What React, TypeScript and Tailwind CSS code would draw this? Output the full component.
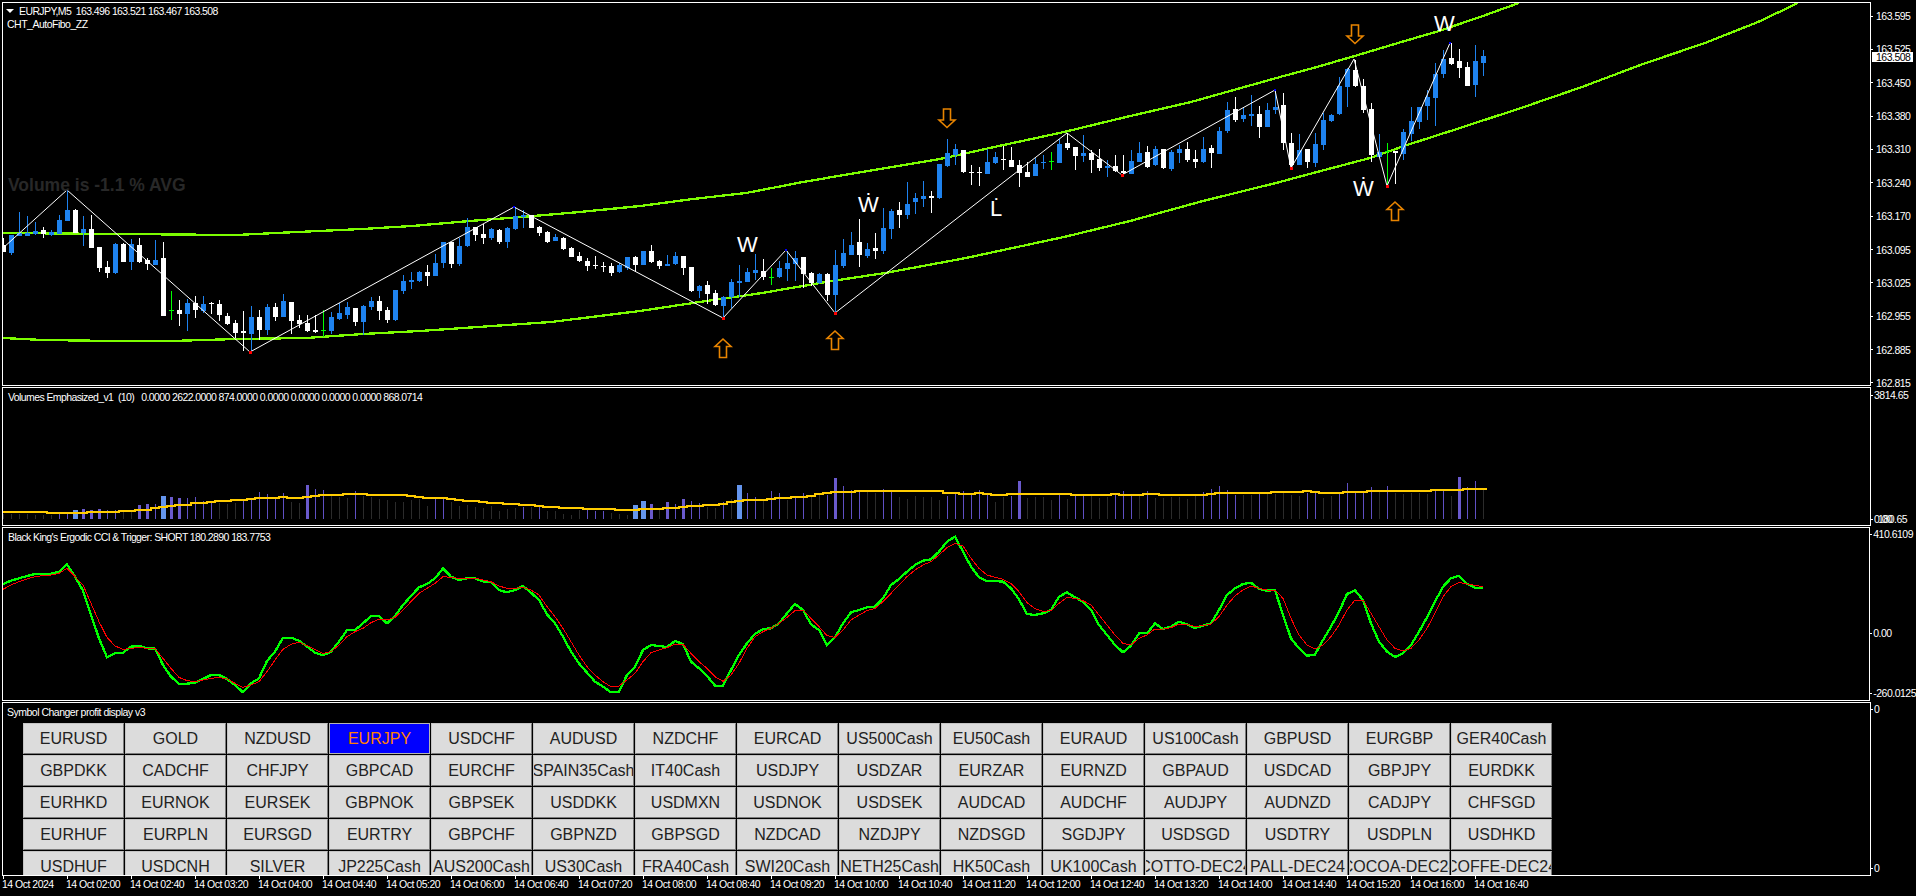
// All chart series were sampled off 1916x896 crops: keep y * 3 so the numbers stay whole.
const y3 = (v: number) => v / 3;
const cx = (i: number) => 3 + 8 * i;

type Candle = [string, number, number, number, number];

// colour, high, body top, body bottom, low
const candles: Candle[] = [
  ["w", 715, 735, 755, 755], ["b", 705, 705, 760, 765], ["b", 637, 700, 710, 710], ["b", 648, 698, 706, 708],
  ["b", 665, 693, 702, 705], ["w", 680, 690, 702, 713], ["b", 690, 696, 706, 708], ["b", 645, 660, 702, 702],
  ["b", 570, 630, 663, 663], ["w", 628, 630, 698, 700], ["b", 648, 687, 698, 738], ["w", 645, 687, 743, 743],
  ["w", 740, 740, 803, 815], ["w", 782, 802, 820, 833], ["b", 730, 732, 820, 822], ["w", 730, 732, 785, 785],
  ["b", 718, 732, 785, 810], ["w", 715, 735, 785, 790], ["w", 775, 780, 793, 810], ["b", 720, 780, 795, 795],
  ["w", 727, 773, 947, 947], ["g", 873, 930, 933, 960], ["w", 900, 930, 942, 978], ["b", 898, 910, 942, 995],
  ["w", 888, 910, 932, 953], ["b", 888, 912, 932, 940], ["w", 907, 908, 911, 943], ["w", 900, 912, 945, 962],
  ["w", 938, 948, 972, 975], ["w", 960, 968, 998, 1015], ["w", 933, 993, 998, 1052], ["b", 918, 950, 1002, 1055],
  ["w", 930, 950, 990, 1020], ["b", 912, 922, 990, 1005], ["w", 910, 920, 950, 965], ["b", 882, 903, 950, 952],
  ["w", 905, 906, 962, 1000], ["w", 945, 960, 972, 985], ["w", 945, 968, 993, 995], ["w", 945, 990, 995, 1000],
  ["g", 930, 990, 993, 1012], ["b", 935, 952, 995, 1000], ["b", 908, 938, 957, 960], ["b", 905, 922, 945, 955],
  ["w", 925, 925, 968, 978], ["b", 915, 918, 965, 1005], ["b", 892, 903, 920, 932], ["w", 888, 903, 933, 960],
  ["w", 920, 930, 960, 968], ["b", 870, 870, 960, 962], ["b", 825, 843, 873, 882], ["b", 817, 840, 846, 867],
  ["b", 813, 816, 843, 845], ["w", 795, 816, 828, 858], ["b", 763, 790, 828, 830], ["b", 725, 727, 790, 802],
  ["w", 725, 727, 792, 803], ["b", 715, 738, 793, 798], ["b", 655, 682, 740, 742], ["w", 680, 682, 705, 722],
  ["w", 672, 702, 713, 732], ["b", 685, 688, 714, 720], ["w", 688, 690, 727, 733], ["b", 680, 685, 728, 743],
  ["b", 620, 648, 688, 690], ["b", 630, 645, 652, 683], ["w", 645, 646, 684, 685], ["w", 678, 681, 698, 707],
  ["w", 692, 695, 725, 727], ["b", 703, 710, 723, 725], ["w", 710, 714, 748, 750], ["w", 742, 744, 770, 772],
  ["w", 755, 768, 783, 785], ["w", 775, 782, 797, 815], ["w", 768, 796, 800, 807], ["w", 785, 797, 800, 815],
  ["w", 790, 798, 818, 828], ["b", 790, 796, 818, 820], ["b", 770, 772, 805, 808], ["w", 768, 770, 795, 815],
  ["b", 752, 753, 795, 795], ["w", 735, 753, 785, 788], ["w", 780, 783, 797, 806], ["b", 765, 792, 797, 798],
  ["b", 757, 768, 792, 795], ["w", 767, 768, 803, 825], ["w", 800, 802, 875, 876], ["b", 855, 858, 873, 893],
  ["w", 843, 855, 882, 913], ["w", 870, 880, 917, 918], ["b", 888, 892, 918, 955], ["b", 838, 847, 893, 925],
  ["b", 795, 843, 848, 890], ["b", 805, 815, 845, 847], ["b", 762, 810, 818, 840], ["w", 778, 814, 832, 840],
  ["g", 803, 832, 835, 855], ["b", 783, 805, 833, 835], ["b", 752, 790, 809, 842], ["b", 753, 775, 792, 842],
  ["w", 770, 771, 821, 862], ["w", 815, 820, 850, 858], ["b", 818, 822, 850, 852], ["w", 820, 822, 885, 905],
  ["b", 750, 795, 885, 940], ["b", 717, 760, 800, 803], ["b", 697, 735, 765, 767], ["w", 657, 727, 767, 800],
  ["b", 730, 747, 768, 775], ["w", 698, 745, 755, 775], ["b", 625, 685, 753, 762], ["b", 628, 633, 687, 717],
  ["w", 605, 631, 645, 682], ["b", 545, 612, 645, 657], ["b", 578, 595, 608, 640], ["b", 543, 588, 597, 622],
  ["w", 573, 589, 594, 638], ["b", 492, 492, 595, 597], ["b", 417, 460, 498, 500], ["b", 432, 448, 465, 495],
  ["w", 450, 451, 518, 519], ["w", 495, 516, 519, 555], ["w", 502, 517, 521, 560], ["b", 448, 487, 522, 523],
  ["b", 455, 472, 489, 492], ["w", 438, 478, 482, 510], ["w", 442, 480, 500, 502], ["w", 480, 495, 518, 560],
  ["w", 487, 516, 530, 533], ["b", 475, 492, 528, 530], ["b", 465, 487, 491, 508], ["g", 457, 483, 486, 512],
  ["b", 418, 432, 488, 490], ["w", 398, 430, 446, 448], ["w", 440, 442, 470, 510], ["b", 405, 460, 470, 487],
  ["w", 450, 458, 480, 518], ["w", 447, 477, 505, 513], ["b", 480, 497, 502, 530], ["w", 465, 498, 513, 516],
  ["w", 465, 513, 520, 530], ["b", 450, 484, 522, 523], ["b", 427, 460, 487, 488], ["w", 437, 456, 500, 503],
  ["b", 438, 448, 495, 497], ["w", 447, 448, 505, 507], ["b", 450, 456, 507, 512], ["b", 435, 448, 459, 490],
  ["w", 425, 447, 480, 485], ["w", 450, 477, 486, 503], ["b", 412, 447, 487, 490], ["w", 435, 444, 459, 503],
  ["b", 382, 393, 462, 464], ["b", 307, 330, 393, 400], ["w", 292, 327, 360, 368], ["b", 322, 345, 357, 367],
  ["b", 285, 343, 348, 378], ["w", 317, 342, 381, 413], ["b", 310, 330, 382, 383], ["b", 270, 322, 330, 342],
  ["w", 280, 315, 430, 450], ["w", 400, 430, 495, 505], ["b", 402, 450, 495, 496], ["w", 447, 447, 486, 505],
  ["b", 400, 432, 488, 503], ["b", 340, 360, 435, 452], ["b", 342, 345, 363, 365], ["b", 232, 258, 343, 345],
  ["b", 203, 207, 260, 320], ["w", 180, 210, 258, 260], ["w", 237, 258, 330, 338], ["w", 310, 327, 465, 487],
  ["b", 402, 455, 470, 472], ["g", 430, 452, 456, 555], ["w", 453, 453, 458, 552], ["b", 388, 396, 462, 480],
  ["b", 320, 363, 402, 422], ["b", 322, 322, 368, 387], ["b", 270, 291, 318, 360], ["b", 190, 222, 293, 380],
  ["b", 150, 178, 222, 233], ["w", 130, 175, 192, 197], ["w", 148, 183, 204, 236], ["w", 185, 201, 258, 258],
  ["b", 135, 183, 255, 290], ["b", 150, 168, 189, 228],
];

// kind (0 grey, 1 thin, 2 thick, 3 wide), top of the bar as y * 3 from 380
const volumes: [number, number][] = [
  [0, 402], [0, 402], [0, 402], [0, 402], [0, 405], [0, 405], [0, 405], [1, 402], [1, 402], [3, 390],
  [2, 387], [2, 390], [2, 387], [1, 390], [1, 390], [0, 393], [0, 393], [2, 375], [2, 372], [1, 372],
  [3, 348], [2, 352], [2, 354], [1, 353], [1, 351], [1, 363], [1, 368], [0, 370], [0, 372], [0, 368],
  [1, 360], [1, 360], [1, 336], [1, 342], [1, 355], [1, 339], [0, 365], [0, 368], [2, 315], [1, 327],
  [1, 330], [0, 348], [0, 350], [0, 353], [1, 333], [0, 348], [0, 350], [0, 358], [0, 360], [0, 365],
  [0, 365], [0, 360], [0, 358], [0, 377], [1, 355], [1, 355], [0, 365], [0, 378], [0, 375], [0, 380],
  [0, 385], [0, 378], [0, 393], [0, 388], [0, 385], [1, 380], [0, 380], [1, 378], [0, 392], [0, 393],
  [0, 402], [0, 405], [0, 390], [1, 388], [1, 392], [1, 392], [0, 398], [0, 402], [0, 405], [3, 375],
  [3, 363], [2, 372], [0, 385], [2, 366], [1, 372], [2, 357], [1, 363], [1, 370], [0, 380], [0, 385],
  [1, 367], [0, 358], [3, 315], [1, 339], [1, 351], [0, 360], [1, 333], [1, 339], [0, 360], [1, 355],
  [1, 339], [0, 350], [0, 345], [1, 345], [2, 294], [1, 318], [1, 330], [1, 330], [0, 335], [0, 339],
  [1, 327], [1, 333], [0, 351], [0, 357], [0, 348], [0, 351], [0, 351], [0, 360], [1, 348], [1, 339],
  [1, 333], [1, 345], [1, 330], [1, 339], [0, 366], [0, 350], [1, 348], [2, 303], [0, 354], [0, 351],
  [0, 351], [0, 360], [1, 345], [0, 357], [1, 342], [1, 342], [0, 348], [0, 354], [0, 351], [1, 342],
  [1, 333], [1, 345], [0, 348], [1, 333], [0, 354], [0, 354], [0, 351], [0, 351], [0, 357], [0, 348],
  [1, 336], [1, 327], [1, 318], [1, 330], [1, 345], [0, 345], [0, 345], [1, 342], [0, 342], [0, 342],
  [0, 339], [0, 345], [0, 348], [1, 339], [1, 336], [0, 354], [0, 348], [1, 342], [1, 309], [1, 339],
  [1, 339], [1, 321], [0, 336], [1, 318], [0, 339], [0, 342], [0, 339], [0, 339], [0, 342], [1, 330],
  [1, 330], [0, 348], [2, 291], [1, 321], [1, 303], [0, 325],
];

// gold average, one level per bar (y * 3 from 380)
const average = [
  396, 396, 396, 396, 396, 396, 399, 399, 399, 399, 399, 396, 396, 396, 396, 393, 393, 390, 390, 385,
  381, 378, 374, 374, 369, 369, 366, 363, 363, 360, 360, 357, 353, 353, 353, 350, 353, 353, 350, 347,
  345, 345, 345, 342, 342, 342, 345, 345, 345, 345, 345, 348, 351, 354, 354, 354, 357, 360, 363, 363,
  366, 369, 369, 372, 372, 375, 375, 378, 381, 381, 384, 384, 384, 387, 387, 387, 387, 390, 390, 390,
  387, 387, 387, 384, 384, 381, 378, 378, 375, 375, 372, 366, 363, 360, 360, 360, 357, 354, 354, 351,
  351, 348, 342, 339, 336, 336, 336, 333, 333, 333, 333, 333, 333, 333, 333, 333, 333, 333, 339, 339,
  342, 342, 339, 342, 345, 345, 342, 342, 342, 342, 342, 342, 342, 342, 345, 345, 345, 345, 345, 342,
  345, 345, 345, 342, 342, 345, 345, 345, 345, 345, 345, 342, 339, 339, 339, 339, 339, 339, 339, 336,
  336, 336, 336, 333, 336, 339, 339, 339, 336, 336, 336, 333, 333, 333, 333, 333, 333, 333, 333, 330,
  330, 330, 330, 327, 327, 327,
];

// Ergodic CCI and its trigger, one point per bar (y * 3 from 380)
const cci = [
  612, 602, 595, 588, 582, 582, 581, 575, 553, 590, 632, 705, 775, 832, 820, 818, 800, 797, 805, 806,
  855, 890, 911, 911, 908, 897, 885, 885, 897, 915, 937, 910, 895, 843, 815, 773, 773, 782, 800, 818,
  826, 815, 785, 750, 750, 730, 708, 708, 730, 708, 675, 648, 622, 612, 595, 565, 590, 600, 595, 595,
  604, 607, 630, 637, 630, 618, 638, 660, 703, 730, 770, 815, 850, 878, 905, 920, 937, 935, 885, 860,
  810, 795, 798, 801, 783, 792, 845, 865, 888, 917, 917, 870, 825, 790, 762, 747, 745, 730, 700, 672,
  690, 733, 750, 795, 772, 730, 697, 690, 682, 680, 655, 615, 597, 575, 555, 542, 538, 515, 485, 470,
  515, 560, 592, 603, 603, 605, 625, 658, 702, 705, 700, 690, 650, 637, 652, 665, 690, 735, 765, 795,
  817, 797, 760, 760, 730, 747, 740, 725, 733, 744, 737, 730, 690, 645, 625, 612, 608, 627, 632, 630,
  705, 775, 805, 827, 824, 780, 740, 695, 642, 631, 660, 730, 785, 815, 831, 820, 795, 755, 712, 665,
  620, 595, 587, 612, 623, 623,
];
const trigger = [
  628, 615, 605, 597, 590, 587, 585, 580, 565, 590, 615, 670, 725, 772, 798, 808, 805, 802, 805, 806,
  835, 865, 892, 902, 905, 900, 895, 892, 897, 910, 922, 915, 905, 875, 840, 808, 793, 787, 797, 808,
  820, 815, 795, 770, 755, 745, 728, 718, 720, 712, 690, 665, 640, 625, 610, 590, 592, 595, 595, 594,
  600, 605, 618, 625, 625, 622, 630, 645, 680, 710, 745, 785, 825, 860, 885, 905, 920, 918, 900, 880,
  845, 818, 810, 803, 793, 793, 820, 845, 865, 890, 904, 885, 850, 805, 770, 755, 745, 730, 712, 692,
  690, 715, 740, 767, 772, 750, 720, 705, 692, 685, 665, 640, 615, 590, 570, 555, 545, 525, 503, 490,
  498, 535, 565, 585, 592, 598, 610, 635, 668, 686, 694, 692, 670, 652, 655, 662, 675, 705, 735, 765,
  790, 795, 775, 765, 747, 747, 743, 732, 733, 740, 737, 732, 710, 675, 648, 630, 618, 625, 630, 630,
  655, 715, 765, 795, 807, 795, 770, 735, 690, 660, 660, 700, 740, 780, 805, 813, 805, 780, 745, 700,
  650, 620, 607, 612, 616, 620,
];

const channelTop =
  "3,233 236,235 276,233 362,229 412,226 470,221 522,217 580,212 640,206 693,199 746,193 803,182 856,173 940,159 999,146 1064,132 1126,117 1191,102 1280,77 1317,67 1358,55 1398,43 1439,31 1480,17 1519,3";
const channelBottom =
  "3,338 43,340 114,341 171,341 237,339 306,338 363,334 420,331 478,327 551,322 640,311 693,303 762,293 832,281 885,273 966,258 1064,237 1130,221 1203,201 1276,183 1317,172 1370,158 1407,145 1460,128 1521,108 1582,87 1643,64 1705,43 1758,22 1798,3";
const zigzag =
  "3,248 67,190 250,352 514,207 723,318 786,250 835,313 1067,133 1122,175 1275,90 1291,168 1354,59 1387,186 1450,43";

const troughs = [[250, 352], [723, 318], [835, 313], [1122, 175], [1291, 168], [1387, 186]];
const peaks = [[514, 207], [786, 250], [1275, 90], [1450, 43]];
const arrows = [
  { x: 947, y: 109, down: true },
  { x: 723, y: 339, down: false },
  { x: 835, y: 331, down: false },
  { x: 1355, y: 25, down: true },
  { x: 1395, y: 202, down: false },
];

const priceLabels = [
  "163.595", "163.525", "163.450", "163.380", "163.310", "163.240",
  "163.170", "163.095", "163.025", "162.955", "162.885", "162.815",
];

const timeLabels = [
  "14 Oct 2024", "14 Oct 02:00", "14 Oct 02:40", "14 Oct 03:20", "14 Oct 04:00", "14 Oct 04:40",
  "14 Oct 05:20", "14 Oct 06:00", "14 Oct 06:40", "14 Oct 07:20", "14 Oct 08:00", "14 Oct 08:40",
  "14 Oct 09:20", "14 Oct 10:00", "14 Oct 10:40", "14 Oct 11:20", "14 Oct 12:00", "14 Oct 12:40",
  "14 Oct 13:20", "14 Oct 14:00", "14 Oct 14:40", "14 Oct 15:20", "14 Oct 16:00", "14 Oct 16:40",
];

const symbols = [
  "EURUSD", "GOLD", "NZDUSD", "EURJPY", "USDCHF", "AUDUSD", "NZDCHF", "EURCAD", "US500Cash", "EU50Cash", "EURAUD", "US100Cash", "GBPUSD", "EURGBP", "GER40Cash",
  "GBPDKK", "CADCHF", "CHFJPY", "GBPCAD", "EURCHF", "SPAIN35Cash", "IT40Cash", "USDJPY", "USDZAR", "EURZAR", "EURNZD", "GBPAUD", "USDCAD", "GBPJPY", "EURDKK",
  "EURHKD", "EURNOK", "EURSEK", "GBPNOK", "GBPSEK", "USDDKK", "USDMXN", "USDNOK", "USDSEK", "AUDCAD", "AUDCHF", "AUDJPY", "AUDNZD", "CADJPY", "CHFSGD",
  "EURHUF", "EURPLN", "EURSGD", "EURTRY", "GBPCHF", "GBPNZD", "GBPSGD", "NZDCAD", "NZDJPY", "NZDSGD", "SGDJPY", "USDSGD", "USDTRY", "USDPLN", "USDHKD",
  "USDHUF", "USDCNH", "SILVER", "JP225Cash", "AUS200Cash", "US30Cash", "FRA40Cash", "SWI20Cash", "NETH25Cash", "HK50Cash", "UK100Cash", "COTTO-DEC24", "PALL-DEC24", "COCOA-DEC24", "COFFE-DEC24",
];

const candleFill: Record<string, string> = { b: "#1e82ee", w: "#ffffff", g: "#00ff00" };

function AxisLabel({ text, labelGap }: { text: string; labelGap: string }) {
  return (
    <div className="flex h-[12px] items-center">
      <span className="h-px w-[2px] bg-white" />
      <span className={`leading-[12px] ${labelGap}`}>{text}</span>
    </div>
  );
}

function PriceChart() {
  return (
    <svg className="absolute inset-0 block" width={1867} height={382} viewBox="3 3 1867 382" shapeRendering="crispEdges">
      <polyline points={channelTop} fill="none" stroke="#7cfc00" strokeWidth={2.3} />
      <polyline points={channelBottom} fill="none" stroke="#7cfc00" strokeWidth={2.3} />
      {candles.map(([c, h, t, b, l], i) => (
        <g key={i} fill={candleFill[c]}>
          <rect x={cx(i)} y={Math.round(y3(h))} width={1} height={Math.max(1, Math.round(y3(l - h)))} />
          <rect x={cx(i) - 2} y={Math.round(y3(t))} width={5} height={Math.max(1, Math.round(y3(b - t)))} />
        </g>
      ))}
      <polyline points={zigzag} fill="none" stroke="#ffffff" strokeWidth={1} shapeRendering="geometricPrecision" />
      {troughs.map(([x, y]) => (
        <rect key={x} x={x - 1} y={y - 1} width={3} height={3} fill="#ff0000" />
      ))}
      {peaks.map(([x, y]) => (
        <rect key={x} x={x - 1} y={y - 1} width={2} height={2} fill="#0000ff" />
      ))}
      {arrows.map((a) => (
        <path
          key={a.x}
          fill="none"
          stroke="#e88400"
          strokeWidth={1.6}
          shapeRendering="geometricPrecision"
          d={
            a.down
              ? `M${a.x - 3.5} ${a.y} h7 v11 h4.5 l-8 7.5 l-8 -7.5 h4.5 z`
              : `M${a.x - 3.5} ${a.y + 18.5} h7 v-11 h4.5 l-8 -7.5 l-8 7.5 h4.5 z`
          }
        />
      ))}
    </svg>
  );
}

function VolumeChart() {
  const gold = average
    .map((v, i) => {
      const y = 380 + Math.round(y3(v));
      return `${i === 0 ? "M" : "L"}${cx(i) - 4} ${y} L${cx(i) + 4} ${y}`;
    })
    .join(" ");
  return (
    <svg className="absolute inset-0 block" width={1867} height={137} viewBox="3 388 1867 137" shapeRendering="crispEdges">
      {volumes.map(([kind, top], i) => {
        const y = 380 + Math.round(y3(top));
        const width = [1, 1, 3, 5][kind];
        const fill = ["#2b2b2b", "#5f50c4", "#6a5acd", "#6495ed"][kind];
        return <rect key={i} x={cx(i) - (width > 1 ? (width - 1) / 2 : 0)} y={y} width={width} height={519 - y} fill={fill} />;
      })}
      <path d={gold} fill="none" stroke="#ffcc00" strokeWidth={2} />
    </svg>
  );
}

function OscillatorChart() {
  const line = (values: number[]) => values.map((v, i) => `${cx(i)},${380 + y3(v)}`).join(" ");
  return (
    <svg className="absolute inset-0 block" width={1867} height={172} viewBox="3 528 1867 172" shapeRendering="crispEdges">
      <polyline points={line(cci)} fill="none" stroke="#00ff00" strokeWidth={2.3} />
      <polyline points={line(trigger)} fill="none" stroke="#ff0000" strokeWidth={1} />
    </svg>
  );
}

function SymbolButton({ name }: { name: string }) {
  const active = name === "EURJPY";
  return (
    <div
      className={
        active
          ? "flex items-center justify-center overflow-hidden whitespace-nowrap border border-[#b4b4b4] bg-[#0000ff] text-[16px] text-[#ff8000]"
          : "flex items-center justify-center overflow-hidden whitespace-nowrap border border-t-[#c4c4c4] border-l-[#c4c4c4] border-r-[#7a7a7a] border-b-[#7a7a7a] bg-[#dcdcdc] text-[16px] text-[#222222]"
      }
    >
      {name}
    </div>
  );
}

export default function App() {
  return (
    <div className="flex h-[896px] w-[1916px] flex-col overflow-hidden bg-black pt-[2px] pl-[2px] font-['Liberation_Sans',sans-serif] text-[10.5px] tracking-[-0.5px] text-white">
      <div className="flex flex-col gap-px">
        {/* main chart */}
        <div className="flex h-[384px]">
          <div className="relative w-[1869px] border border-white">
            <PriceChart />
            <div className="absolute left-[3px] top-[2px] flex items-center gap-[5px] leading-[12px]">
              <span className="h-0 w-0 border-x-[4px] border-t-[4px] border-x-transparent border-t-white" />
              <span className="whitespace-pre tracking-[-0.6px]">EURJPY,M5  163.496 163.521 163.467 163.508</span>
            </div>
            <div className="absolute left-[4px] top-[15px] leading-[12px]">CHT_AutoFibo_ZZ</div>
            <div className="absolute left-[5px] top-[173px] text-[17.5px] leading-[18px] font-bold tracking-normal text-[#282828]">Volume is -1.1 % AVG</div>
            <span className="absolute left-[734px] top-[231px] text-[22px] leading-none tracking-normal">W</span>
            <span className="absolute left-[855px] top-[191px] text-[22px] leading-none tracking-normal">Ẇ</span>
            <span className="absolute left-[987px] top-[195px] text-[22px] leading-none tracking-normal">L̇</span>
            <span className="absolute left-[1431px] top-[10px] text-[22px] leading-none tracking-normal">W</span>
            <span className="absolute left-[1350px] top-[175px] text-[22px] leading-none tracking-normal">Ẇ</span>
          </div>
          <div className="relative flex-1">
            <div className="mt-[8px] flex h-[379px] flex-col justify-between">
              {priceLabels.map((p) => (
                <AxisLabel key={p} text={p} labelGap="ml-[3px]" />
              ))}
            </div>
            <div className="absolute left-[1px] top-[50px] h-[10px] w-[41px] bg-white pl-[4px] leading-[10px] text-black">163.508</div>
          </div>
        </div>

        {/* volumes */}
        <div className="flex h-[139px]">
          <div className="relative w-[1869px] border border-white">
            <VolumeChart />
            <div className="absolute left-[5px] top-[3px] whitespace-pre leading-[12px] tracking-[-0.6px]">Volumes Emphasized_v1  (10)   0.0000 2622.0000 874.0000 0.0000 0.0000 0.0000 0.0000 868.0714</div>
          </div>
          <div className="relative flex-1">
            <div className="mt-[2px] flex h-[136px] flex-col justify-between">
              <AxisLabel text="3814.65" labelGap="ml-[1px]" />
              <AxisLabel text="0.00" labelGap="ml-[1px]" />
            </div>
            <span className="absolute left-[7px] top-[126px] leading-[12px]">180.65</span>
          </div>
        </div>

        {/* ergodic cci */}
        <div className="flex h-[174px]">
          <div className="relative w-[1869px] border border-white">
            <OscillatorChart />
            <div className="absolute left-[5px] top-[3px] leading-[12px] tracking-[-0.6px]">Black King's Ergodic CCI &amp; Trigger: SHORT 180.2890 183.7753</div>
          </div>
          <div className="flex-1">
            <div className="mt-[1px]">
              <AxisLabel text="410.6109" labelGap="ml-[1px]" />
            </div>
            <div className="mt-[87px]">
              <AxisLabel text="0.00" labelGap="ml-[1px]" />
            </div>
            <div className="mt-[48px]">
              <AxisLabel text="-260.0125" labelGap="ml-[1px]" />
            </div>
          </div>
        </div>

        {/* symbol changer */}
        <div className="flex h-[174px]">
          <div className="h-full w-[1869px] overflow-hidden border border-white">
            <div className="h-[20px] pl-[4px] leading-[18px]">Symbol Changer profit display v3</div>
            <div className="ml-[20px] grid w-max grid-cols-[repeat(15,101px)] auto-rows-[31px] gap-px tracking-normal">
              {symbols.map((s) => (
                <SymbolButton key={s} name={s} />
              ))}
            </div>
          </div>
          <div className="mt-[1px] flex h-[171px] flex-1 flex-col justify-between">
            <AxisLabel text="0" labelGap="ml-[1px]" />
            <AxisLabel text="0" labelGap="ml-[1px]" />
          </div>
        </div>
      </div>

      {/* time axis */}
      <div className="flex pl-px">
        {timeLabels.map((t) => (
          <div key={t} className="w-[64px]">
            <div className="h-[3px] w-px bg-white" />
            <div className="-ml-px whitespace-nowrap leading-[11px]">{t}</div>
          </div>
        ))}
      </div>
    </div>
  );
}
